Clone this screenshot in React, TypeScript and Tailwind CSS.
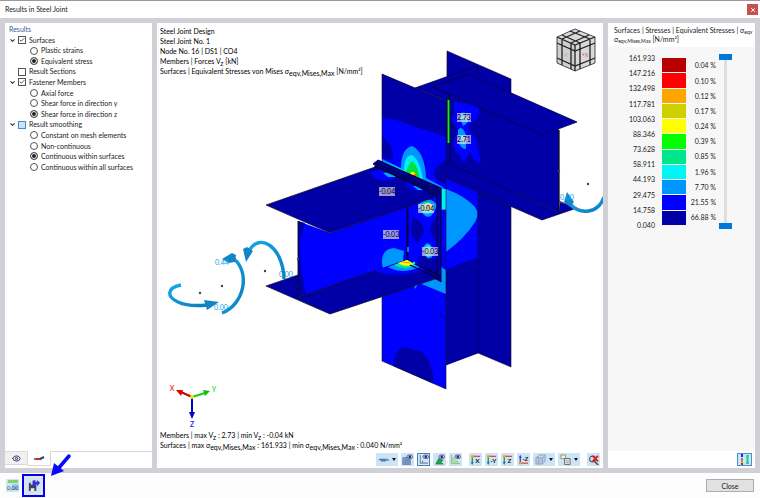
import type { ReactNode } from 'react'
import { ChevronDown, Check, Eye, X } from 'lucide-react'

const LEGEND = [
  ['bg-[#b80000]', '0.04 %'],
  ['bg-[#ff0000]', '0.10 %'],
  ['bg-[#ffa500]', '0.12 %'],
  ['bg-[#d0d000]', '0.17 %'],
  ['bg-[#ffff00]', '0.24 %'],
  ['bg-[#00ff00]', '0.39 %'],
  ['bg-[#00e68a]', '0.85 %'],
  ['bg-[#00f5f5]', '1.96 %'],
  ['bg-[#0096ff]', '7.70 %'],
  ['bg-[#0000ff]', '21.55 %'],
  ['bg-[#0000a6]', '66.88 %'],
]

const LIMITS = [
  '161.933', '147.216', '132.498', '117.781', '103.063', '88.346',
  '73.628', '58.911', '44.193', '29.475', '14.758', '0.040',
]

function Group({ label, checked, open, tinted }: { label: string; checked?: boolean; open?: boolean; tinted?: boolean }) {
  return (
    <div className="flex h-[10px] items-center pl-1">
      <span className="mr-[3px] flex w-[6px] justify-center">
        {open && <ChevronDown size={7} strokeWidth={3.5} className="shrink-0 text-[#333]" />}
      </span>
      <label className="flex items-center gap-[3px]">
        <span className="relative flex size-2">
          <input
            type="checkbox"
            defaultChecked={checked}
            className={`peer size-2 appearance-none border ${tinted ? 'border-[#3b8fd0] bg-[#cce4f7]' : 'border-[#555] bg-white'}`}
          />
          <Check size={6} strokeWidth={3} className="pointer-events-none absolute inset-px hidden text-[#222] peer-checked:block" />
        </span>
        {label}
      </label>
    </div>
  )
}

function Option({ name, label, checked }: { name: string; label: string; checked?: boolean }) {
  return (
    <label className="flex h-[10px] items-center gap-[3px] pl-[25px]">
      <input
        type="radio"
        name={name}
        defaultChecked={checked}
        className="size-2 appearance-none rounded-full border border-[#555] bg-white checked:bg-[#222] checked:shadow-[inset_0_0_0_1px_white]"
      />
      {label}
    </label>
  )
}

function ResultsPanel() {
  return (
    <section className="flex min-h-0 flex-col bg-white">
      <h2 className="px-1 pt-px leading-[10px] text-[#3d5a94]">Results</h2>
      <div className="mt-px flex h-[137px] flex-col justify-between">
        <Group label="Surfaces" checked open />
        <Option name="surfaces" label="Plastic strains" />
        <Option name="surfaces" label="Equivalent stress" checked />
        <Group label="Result Sections" />
        <Group label="Fastener Members" checked open />
        <Option name="fasteners" label="Axial force" />
        <Option name="fasteners" label="Shear force in direction y" />
        <Option name="fasteners" label="Shear force in direction z" checked />
        <Group label="Result smoothing" open tinted />
        <Option name="smoothing" label="Constant on mesh elements" />
        <Option name="smoothing" label="Non-continuous" />
        <Option name="smoothing" label="Continuous within surfaces" checked />
        <Option name="smoothing" label="Continuous within all surfaces" />
      </div>
      <div className="mt-auto flex h-[17px] items-start">
        <button aria-label="Display" className="flex h-[14px] w-[22px] items-center justify-center border-y border-[#d9d9d9] bg-[#f0f0f0]">
          <Eye size={9} strokeWidth={2.5} className="text-[#24306b]" />
        </button>
        <button aria-label="Members" className="flex h-[15px] w-[24px] items-center justify-center border-x border-b border-[#d9d9d9] bg-white">
          <svg viewBox="0 0 12 8" className="h-[8px] w-[12px]">
            <path d="M1 5 H5" stroke="#444" strokeWidth="1.500" />
            <path d="M3 5 H8" stroke="#e02020" strokeWidth="2" />
            <path d="M7 5 L11 3" stroke="#2b3f8f" strokeWidth="2" />
          </svg>
        </button>
        <div className="flex-1 border-t border-[#d9d9d9]" />
      </div>
    </section>
  )
}

function Tag({ x, y, children }: { x: number; y: number; children: string }) {
  const w = children.length > 4 ? 16 : 14
  return (
    <g>
      <rect x={x} y={y} width={w} height="9" fill="#dcd6f2" fillOpacity="0.7" />
      <text x={x + w / 2} y={y + 7} textAnchor="middle" fill="#000">{children}</text>
    </g>
  )
}

function Scene() {
  return (
    <svg viewBox="157 23 446 428" className="absolute inset-0 size-full text-[7px]" role="img" aria-label="Stress plot of the steel joint">
      <defs>
        <linearGradient id="arc" x1="0" y1="0" x2="1" y2="1">
          <stop offset="0" stopColor="#16a6ec" />
          <stop offset="1" stopColor="#0b7fbd" />
        </linearGradient>
        <clipPath id="frontFlange"><path d="M382 74 L446 101 L446 389 L382 361 Z" /></clipPath>
        <clipPath id="plate"><path d="M407 207 L441 193 L441 280 L407 262 Z" /></clipPath>
        <clipPath id="topFlange"><path d="M266 205 L375 167 L438 196 L330 233 Z" /></clipPath>
      </defs>

      {/* column: rear flange and web */}
      <path d="M447 51 L511 79 L511 367 L478 353 L446 365 Z" fill="#0000a6" stroke="#111" strokeWidth="0.6" />
      <path d="M415 88 L477 66 L478 353 L446 365 L446 101 Z" fill="#0000a6" />
      <path d="M415 88 L477 66 V75" fill="none" stroke="#000040" strokeWidth="0.8" />
      <path d="M446 175 L478 190 L478 258 Q462 262 446 270 Z" fill="#0000ff" />
      <path d="M446 189 Q465 196 475 207 Q480 214 475 222 Q465 238 446 252 Z" fill="#0096ff" />
      <path d="M478 190 V353" stroke="#000060" strokeWidth="0.7" />

      {/* column: front flange */}
      <path d="M382 74 L446 101 L446 389 L382 361 Z" fill="#0000ff" />
      <g clipPath="url(#frontFlange)">
        <path d="M382 74 L446 101 L446 137 Q430 131 415 127 Q398 119 382 118 Z" fill="#0000a6" />
        <path d="M382 136 Q394 146 393 158 Q388 162 382 156 Z" fill="#0000a6" />
        <path d="M446 160 Q434 166 434 175 Q438 184 446 183 Z" fill="#0000a6" />
        <path d="M382 159 L401 168 Q401 149 412 146 Q425 152 426 178 L441 186 L446 190 V210 H436 L378 178 Z" fill="#0096ff" />
        <path d="M382 161 L404 170 Q404 156 412 155 Q420 160 423 180 L400 173 Z" fill="#00f0f8" />
        <path d="M406 173 Q408 163 413 161 Q419 169 420 181 Z" fill="#00e040" />
        <path d="M409 175 Q411 171 414 172 L419 180 Z" fill="#ffff00" />
        <path d="M412 175 L416 174 L418 180 Z" fill="#ff5a00" />
        <path d="M442 189 H446 V209 H442 Z" fill="#00f0f8" />
        <path d="M413 280 L415 289 L419 283 L446 294 V270 L441 267 Z" fill="#0096ff" />
        <path d="M393 371 Q394 346 406 347 Q412 351 419 350 Q434 359 434 390 Z" fill="#0000a6" />
        <path d="M440 312 L443 318 L440 316 Z" fill="#000080" />
      </g>
      <path d="M446 389 L382 361 V74 L446 101 V389" fill="none" stroke="#111" strokeWidth="0.6" />

      {/* right beam */}
      <path d="M446 163 L451 164 L559 212 L560 202 L577 208 L542 220 L446 178 Z" fill="#0000a6" />
      <path d="M446 178 L542 220 L577 208 L559 201" fill="none" stroke="#111" strokeWidth="0.7" />
      <path d="M450 94 L559 130 L559 212 L450 164 Z" fill="#0000a6" stroke="#000050" strokeWidth="0.7" />
      <path d="M453 101 Q460 104 466 103 L478 107 Q482 116 474 121 Q467 124 469 130 L476 140 L481 162 Q474 164 470 151 L464 163 L456 151 Q452 145 454 138 Q461 131 456 125 L452 121 Q456 112 453 101 Z" fill="#0000ff" />
      <path d="M459 116 Q462 109 469 116 Q470 122 463 126 Z M458 130 Q462 124 466 135 L466 149 Q457 149 458 130 Z" fill="#0096ff" />
      <path d="M461 117 L467 114 L466 121 Z M460 136 L466 135 L464 145 Z" fill="#00f0f8" />
      <path d="M465 116 V120 M465 138 V141" stroke="#ff5040" strokeWidth="1.200" />
      <path d="M432 87 L468 74 L577 122 L542 135 Z" fill="#0000a6" stroke="#00004a" strokeWidth="0.8" />
      <path d="M446 101 L450 95 V164" fill="none" stroke="#00004a" strokeWidth="0.8" />
      <path d="M559 130 V212" stroke="#111" strokeWidth="0.9" />
      <path d="M448.500 99 V143" stroke="#003000" strokeWidth="3" />
      <path d="M448.500 100 V143" stroke="#12e838" strokeWidth="1.700" />

      {/* end plate with the left beam between its flanges */}
      <path d="M378 160 L441 188 V282 L407 266 V207 L374 168 Z" fill="#0000d8" />
      <path d="M407 207 L441 193 V280 L407 262 Z" fill="#0000ff" />
      <g clipPath="url(#plate)">
        <path d="M413 217 Q423 220 424 232 L418 243 Q411 237 411 229 Z M441 211 Q433 218 430 230 Q433 240 438 243 L441 245 Z M407 219 Q412 229 407 244 Z M419 256 L441 260 V277 L418 264 Z" fill="#0000a6" />
        <path d="M418 205 Q429 194 437 205 Q433 217 428 217 Q421 215 418 205 Z M423 248 Q428 237 434 251 Q433 260 427 258 Z" fill="#0096ff" />
        <circle cx="427" cy="208" r="6" fill="#00f0d0" />
        <circle cx="428" cy="207" r="4" fill="#ffef00" />
        <circle cx="428" cy="207" r="2" fill="#ff5000" />
        <ellipse cx="428" cy="251" rx="3.500" ry="6" fill="#00f0d0" />
        <circle cx="429" cy="251" r="2" fill="#ffd000" />
      </g>
      <path d="M298 221 L330 233 L407 206 V262 L298 297 Z" fill="#0000ff" />
      <path d="M298 221 L305 223 L300 240 Q300 273 306 294 L298 297 Z" fill="#0000a6" />
      <path d="M382 264 Q381 249 394 248 L404 251 L403 261 L383 268 Z" fill="#0096ff" />
      <path d="M266 286 L298 275 V297 L407 260 L441 277 L330 314 Z" fill="#0000a6" />
      <path d="M298 297 L407 260 L441 277 L330 314 L266 286 L298 275" fill="none" stroke="#111" strokeWidth="0.7" />
      <path d="M374 271 Q400 279 427 269 L407 260 Z" fill="#0000ff" />
      <path d="M388 267 Q402 275 420 267 L407 260 Z" fill="#0096ff" />
      <path d="M394 265 Q406 271 416 265 L407 260 Z" fill="#00ef90" />
      <path d="M398 263 Q405 268 414 264 L407 260 Z" fill="#ffff00" />
      <path d="M402 262 L410 263" stroke="#ff8a00" strokeWidth="1.200" />
      <path d="M298 221 V297" stroke="#111" strokeWidth="0.9" />
      <path d="M407.500 206 V260" stroke="#00002c" strokeWidth="1.800" />
      <path d="M408 247 V252" stroke="#00e0f0" strokeWidth="1.200" />
      <path d="M266 205 L375 167 L438 196 L330 233 Z" fill="#0000a6" stroke="#111" strokeWidth="0.7" />
      <g clipPath="url(#topFlange)">
        <path d="M371 172 Q373 180 385 181 L396 178 L382 169 Z M406 184 Q409 192 426 191 L428 187 L407 179 Z" fill="#0000ff" />
        <path d="M383 173 L388 177 L396 177 L390 172 Z M413 186 L418 190 H425 L420 186 Z" fill="#00a8ff" />
      </g>
      <path d="M373 164 L378 160 L441 188 L438 197 Z" fill="#00008c" stroke="#000030" strokeWidth="0.9" />
      <path d="M375 163 L440 192 M374 166 L438 194" stroke="#000030" strokeWidth="0.8" />
      <path d="M437 196 L441 188 V282 L437 279 Z" fill="#0000a6" stroke="#000030" strokeWidth="0.9" />
      <path d="M413 263 L441 276 M410 265 L441 280" stroke="#000030" strokeWidth="1.300" />
      <circle cx="414" cy="263" r="1.200" fill="#00f0f8" />

      <Tag x={457} y={113}>2.73</Tag>
      <Tag x={457} y={135}>2.71</Tag>
      <Tag x={379} y={187}>-0.04</Tag>
      <Tag x={418} y={204}>-0.04</Tag>
      <Tag x={383} y={230}>-0.03</Tag>
      <Tag x={422} y={247}>-0.03</Tag>

      {/* moment arrows */}
      <g fill="none" stroke="url(#arc)" strokeWidth="3.400">
        <path d="M181 285 C166 288 167 297 178 302 Q189 307 207 305" />
        <path d="M222 313 C245 304 250 272 234 259" />
        <path d="M284 279 C283 246 259 232 249 251" />
        <path d="M604 197 C598 214 580 215 570 204" />
      </g>
      <g fill="#1186c6">
        <path d="M219 302 L204 300 L207 310 Z" />
        <path d="M222 259 L232 253 L236 255 L235 262 L229 263 Z" />
        <path d="M246 262 L243 249 L247 247 L253 251 Z" />
        <path d="M567 192 L564 202 L570 207 L574 202 Z" />
      </g>
      <g fill="#12a0e8">
        <text x="215" y="265">0.44</text>
        <text x="214" y="310">0.00</text>
        <text x="279" y="277">0.00</text>
        <text x="560" y="200">0.00</text>
      </g>
      <g fill="#444">
        <circle cx="200" cy="293" r="1.200" />
        <circle cx="222" cy="286" r="1.200" />
        <circle cx="265" cy="271" r="1.200" />
        <circle cx="298" cy="259" r="1.200" />
        <circle cx="559" cy="171" r="1.200" />
        <circle cx="588" cy="184" r="1.200" />
      </g>

      {/* navigation cube */}
      <path d="M575 29 L595 37 V63 L575 71 L557 63 V37 Z" fill="#d9d9d9" />
      <path d="M557 37 L575 45 V71 L557 63 Z" fill="#cfcfcf" />
      <g fill="none" stroke="#222" strokeWidth="1.300">
        <path d="M575 29 L595 37 V63 L575 71 L557 63 V37 Z" strokeWidth="0.8" />
        <path d="M557 37 L575 45 L595 37 M575 45 V71" />
        <path d="M557 43 L575 51 L595 43 M557 58 L575 66 L595 58 M562 40 V65 M571 43 V69 M580 43 V69 M590 40 V65" />
        <path d="M562 35 L580 43 M570 31 L590 39 M580 31 L562 39 M589 35 L571 43" />
      </g>
      <text x="563" y="57" fill="#7fc98a" className="text-[5px]">-Y</text>
      <text x="582" y="57" fill="#e05060" className="text-[5px]">+X</text>

      {/* coordinate axes */}
      <g strokeWidth="2">
        <path d="M192 397 L181 392" stroke="#c00000" />
        <path d="M192 397 L205 393" stroke="#10d010" />
        <path d="M192 397 V414" stroke="#0000c8" />
      </g>
      <path d="M176 390 L183 390 L181 396 Z" fill="#e00000" />
      <path d="M210 391 L203 390 L205 396 Z" fill="#10c010" />
      <path d="M192 419 L189 412 H195 Z" fill="#0000c8" />
      <circle cx="192" cy="397" r="2" fill="#f0e800" />
      <g textAnchor="middle" fontWeight="600">
        <text x="172" y="391" fill="#ff2020">X</text>
        <text x="214" y="392" fill="#20e020">Y</text>
        <text x="192" y="427" fill="#2020ff">Z</text>
      </g>
    </svg>
  )
}

function Low({ children }: { children: ReactNode }) {
  return <span className="relative top-[2px]">{children}</span>
}

function ToolButton({ label, wide, active, gap, children }: { label: string; wide?: boolean; active?: boolean; gap?: boolean; children: ReactNode }) {
  return (
    <button
      aria-label={label}
      className={`flex h-[13px] items-center justify-center gap-[3px] ${wide ? 'w-[22px]' : 'w-[13px]'} ${gap ? 'ml-1' : ''} ${active ? 'border border-[#4a7fb5] bg-[#d5e8fa]' : 'bg-[#cce4f7]'}`}
    >
      <svg viewBox="0 0 12 12" className="size-[11px] shrink-0" fill="none">{children}</svg>
      {wide && <span className="size-0 border-x-2 border-t-3 border-x-transparent border-t-[#111]" />}
    </button>
  )
}

function SmallEye() {
  return (
    <g>
      <ellipse cx="8.500" cy="3" rx="3.200" ry="2" fill="#c9cdea" stroke="#39407e" strokeWidth="0.8" />
      <circle cx="8.500" cy="3" r="1.300" fill="#1b2468" />
    </g>
  )
}

function AxisIcon({ label, down }: { label: string; down?: boolean }) {
  return (
    <g>
      <path d={down ? 'M2 10 H11' : 'M2 2.500 H11'} stroke="#e03020" strokeWidth="1.200" />
      <path d="M2.500 2 V11" stroke={down ? '#2050d0' : '#18a040'} strokeWidth="1.400" />
      <path d={down ? 'M1 4 L2.500 1 L4 4 Z' : 'M1 8.500 L2.500 12 L4 8.500 Z'} fill={down ? '#1040c0' : '#0878c0'} />
      <circle cx="2.500" cy={down ? 10 : 2.5} r="1.500" fill="#ff9a20" />
      <text x="8" y={down ? 8 : 10} textAnchor="middle" fontWeight="700" fill="#222" className="text-[7px]">{label}</text>
    </g>
  )
}

function Toolbar() {
  return (
    <div className="flex h-[17px] items-center justify-end gap-[3px] pr-[3px]">
      <ToolButton label="Member view" wide>
        <path d="M1 6 H9 L12 7 M3 7.500 H9" stroke="#587ba5" strokeWidth="1.400" />
      </ToolButton>
      <ToolButton label="Show grid">
        <path d="M1 4 H9 V12 H1 Z" fill="#8fa9c8" stroke="#5f7fa8" />
        <path d="M1 7 H9 M1 9.500 H9 M4 4 V12 M6.500 4 V12" stroke="#5f7fa8" strokeWidth="0.8" />
        <SmallEye />
      </ToolButton>
      <ToolButton label="Show axes" active>
        <path d="M2.500 1 V10 H11 M5 10 V7" stroke="#6f8cb0" strokeWidth="1.200" />
        <SmallEye />
      </ToolButton>
      <ToolButton label="Show surfaces">
        <path d="M2 11 L5 5 L10 7 L7 9 L10 11 Z" fill="#18a848" stroke="#147038" strokeWidth="0.7" />
        <SmallEye />
      </ToolButton>
      <ToolButton label="Show diagram">
        <path d="M1.500 1 V10.500 H11" stroke="#88c088" />
        <path d="M3 9 V4 L9 9 Z" fill="#bce8a0" stroke="#88c868" strokeWidth="0.8" />
        <SmallEye />
      </ToolButton>
      <ToolButton label="View in X" gap><AxisIcon label="X" /></ToolButton>
      <ToolButton label="View in minus Y"><AxisIcon label="-Y" /></ToolButton>
      <ToolButton label="View in Z"><AxisIcon label="Z" /></ToolButton>
      <ToolButton label="View in minus Z"><AxisIcon label="-Z" down /></ToolButton>
      <ToolButton label="Isometric view" wide>
        <path d="M1 4 L5 1 H11 V8 L8 11 H1 Z M1 4 H8 L11 1 M8 4 V11 M4 4 V11" fill="#b5c8e0" stroke="#8d9fc0" strokeWidth="0.9" />
      </ToolButton>
      <ToolButton label="Print" wide>
        <path d="M1 1 H6 V5 H1 Z" fill="#fff3c8" stroke="#777" strokeWidth="0.8" />
        <path d="M5 5 H11 V11.500 H5 Z" fill="#e8e8e8" stroke="#555" strokeWidth="0.9" />
        <path d="M6.500 7.500 H9.500 M6.500 9.500 H9.500" stroke="#777" strokeWidth="0.7" />
      </ToolButton>
      <ToolButton label="Reset zoom" gap>
        <circle cx="5" cy="5.500" r="3.200" stroke="#555" strokeWidth="1.200" />
        <path d="M7 8 L11 12" stroke="#444" strokeWidth="1.600" />
        <path d="M5 2 L11 8 M11 2 L5 8" stroke="#e81818" strokeWidth="1.900" />
      </ToolButton>
    </div>
  )
}

function Viewport() {
  return (
    <section className="flex min-h-0 min-w-0 flex-col bg-white">
      <div className="relative min-h-0 flex-1 overflow-hidden leading-[10px] text-black">
        <Scene />
        <div className="absolute top-[3px] left-[3px] whitespace-nowrap">
          <p>Steel Joint Design</p>
          <p>Steel Joint No. 1</p>
          <p>Node No. 16 | DS1 | CO4</p>
          <p>Members | Forces V<Low>z</Low> [kN]</p>
          <p>Surfaces | Equivalent Stresses von Mises σ<Low>eqv,Mises,Max</Low> [N/mm²]</p>
        </div>
        <div className="absolute bottom-px left-[3px] whitespace-nowrap">
          <p>Members | max V<Low>z</Low> : 2.73 | min V<Low>z</Low> : -0.04 kN</p>
          <p>Surfaces | max σ<Low>eqv,Mises,Max</Low> : 161.933 | min σ<Low>eqv,Mises,Max</Low> : 0.040 N/mm²</p>
        </div>
      </div>
      <Toolbar />
    </section>
  )
}

const RANGE =
  'pointer-events-none col-start-1 row-start-1 h-[175px] w-[13px] appearance-none bg-transparent [writing-mode:vertical-lr] [direction:rtl] [&::-webkit-slider-thumb]:pointer-events-auto [&::-webkit-slider-thumb]:h-[6px] [&::-webkit-slider-thumb]:w-[13px] [&::-webkit-slider-thumb]:appearance-none [&::-webkit-slider-thumb]:bg-[#0078d7]'

function LegendPanel() {
  return (
    <section className="flex min-h-0 flex-col bg-[#f7f7f7]">
      <header className="h-6 bg-white px-[6px] pt-[3px] leading-[8px] whitespace-nowrap">
        <p>Surfaces | Stresses | Equivalent Stresses | σ<span className="relative top-px text-[5px]">eqv</span></p>
        <p>σ<span className="relative top-px text-[5px]">eqv,Mises,Max</span> [N/mm²]</p>
      </header>
      <div className="flex flex-1 justify-end pt-[7px] pr-[23px]">
        <div className="flex h-[175px] flex-col justify-between text-right leading-[8px]">
          {LIMITS.map((v) => <span key={v}>{v}</span>)}
        </div>
        <div className="mt-1 ml-[7px] flex h-[167px] w-6 flex-col gap-px">
          {LEGEND.map(([color]) => <div key={color} className={`flex-1 ${color}`} />)}
        </div>
        <div className="mt-1 flex h-[167px] w-[30px] flex-col text-right">
          {LEGEND.map(([color, share]) => (
            <span key={color} className="flex flex-1 items-center justify-end">{share}</span>
          ))}
        </div>
        <div className="ml-[3px] grid h-[175px] w-[13px] justify-items-center">
          <div className="col-start-1 row-start-1 my-1 w-[3px] bg-[#dedede]" />
          <input type="range" aria-label="Upper limit" min="0" max="100" defaultValue="100" className={RANGE} />
          <input type="range" aria-label="Lower limit" min="0" max="100" defaultValue="0" className={RANGE} />
        </div>
      </div>
      <div className="flex h-[17px] items-center justify-end bg-white pr-[3px]">
        <button aria-label="Legend settings" className="flex h-[13px] w-[15px] items-center justify-center border border-[#4a90c8] bg-[#cce4f7]">
          <svg viewBox="0 0 13 11" className="h-[11px] w-[13px]">
            <path d="M3 0 H5 V3 H3 Z" fill="#1030c0" />
            <path d="M3 4 H5 V7 H3 Z" fill="#888" />
            <path d="M3 7 H5 V9 H3 Z" fill="#ff9000" />
            <path d="M3 9 H5 V11 H3 Z" fill="#d02020" />
            <path d="M8 1 H11 V3 H8 Z M8 8 H11 V10 H8 Z" fill="#20c8e8" />
            <path d="M8.500 3 H10.500 V8 H8.500 Z" fill="#20d840" />
          </svg>
        </button>
      </div>
    </section>
  )
}

function Footer() {
  return (
    <footer className="relative flex h-[25px] items-center bg-[#fdfdfd] pr-[6px] pl-[6px]">
      <button aria-label="Units" className="flex h-[13px] w-[13px] items-center justify-center bg-[#cce4f7]">
        <svg viewBox="0 0 13 13" className="size-[13px]">
          <path d="M2 1 H12 V4 H2 Z" fill="#7fd36c" />
          <path d="M6 5 H12 V11 H6 Z" fill="#9cc4ff" />
          <text x="1" y="11" fill="#1c5a40" className="text-[6px]">0,00</text>
        </svg>
      </button>
      <div className="ml-[3px] flex size-[23px] items-center justify-center border-2 border-[#0000f5] bg-[#e4e4e4]">
        <button aria-label="Save results" className="flex size-[15px] items-center justify-center bg-[#cce4f7]">
          <svg viewBox="0 0 14 14" className="size-[13px]">
            <path d="M2 4 H9 L10 5 V13 H2 Z" fill="#3f4454" />
            <path d="M4 4 H7 V6 H4 Z M4 10 H8 V13 H4 Z" fill="#e8eaf2" />
            <path d="M6 2 V8 H9 V6 H11 V8 L14 4 L11 1 V3 H9 V1 Z" fill="#3434d8" />
          </svg>
        </button>
      </div>
      <button className="ml-auto h-[13px] w-[48px] border border-[#adadad] bg-[#e1e1e1] text-center leading-[10px]">Close</button>
      <svg viewBox="0 0 24 24" className="pointer-events-none absolute bottom-[21px] left-[49px] size-6">
        <path d="M20 3 L8 17" stroke="#0808ff" strokeWidth="3.500" strokeLinecap="round" />
        <path d="M2 23 L5 10 L15 18 Z" fill="#0808ff" />
      </svg>
    </footer>
  )
}

export default function App() {
  return (
    <div className="flex h-screen flex-col bg-[#d0d0d6] font-['Lato','Noto_Sans',sans-serif] text-[7px] text-[#1a1a1a]">
      <header className="flex h-[18px] items-center justify-between border-t border-[#999] bg-white pr-[2px] pl-[5px]">
        <h1>Results in Steel Joint</h1>
        <button aria-label="Close window" className="flex h-[11px] w-[11px] items-center justify-center bg-[#c75050] text-white">
          <X size={6} strokeWidth={4} />
        </button>
      </header>
      <main className="grid min-h-0 flex-1 grid-cols-[147px_1fr_147px] gap-[5px] p-[5px]">
        <ResultsPanel />
        <Viewport />
        <LegendPanel />
      </main>
      <Footer />
    </div>
  )
}
